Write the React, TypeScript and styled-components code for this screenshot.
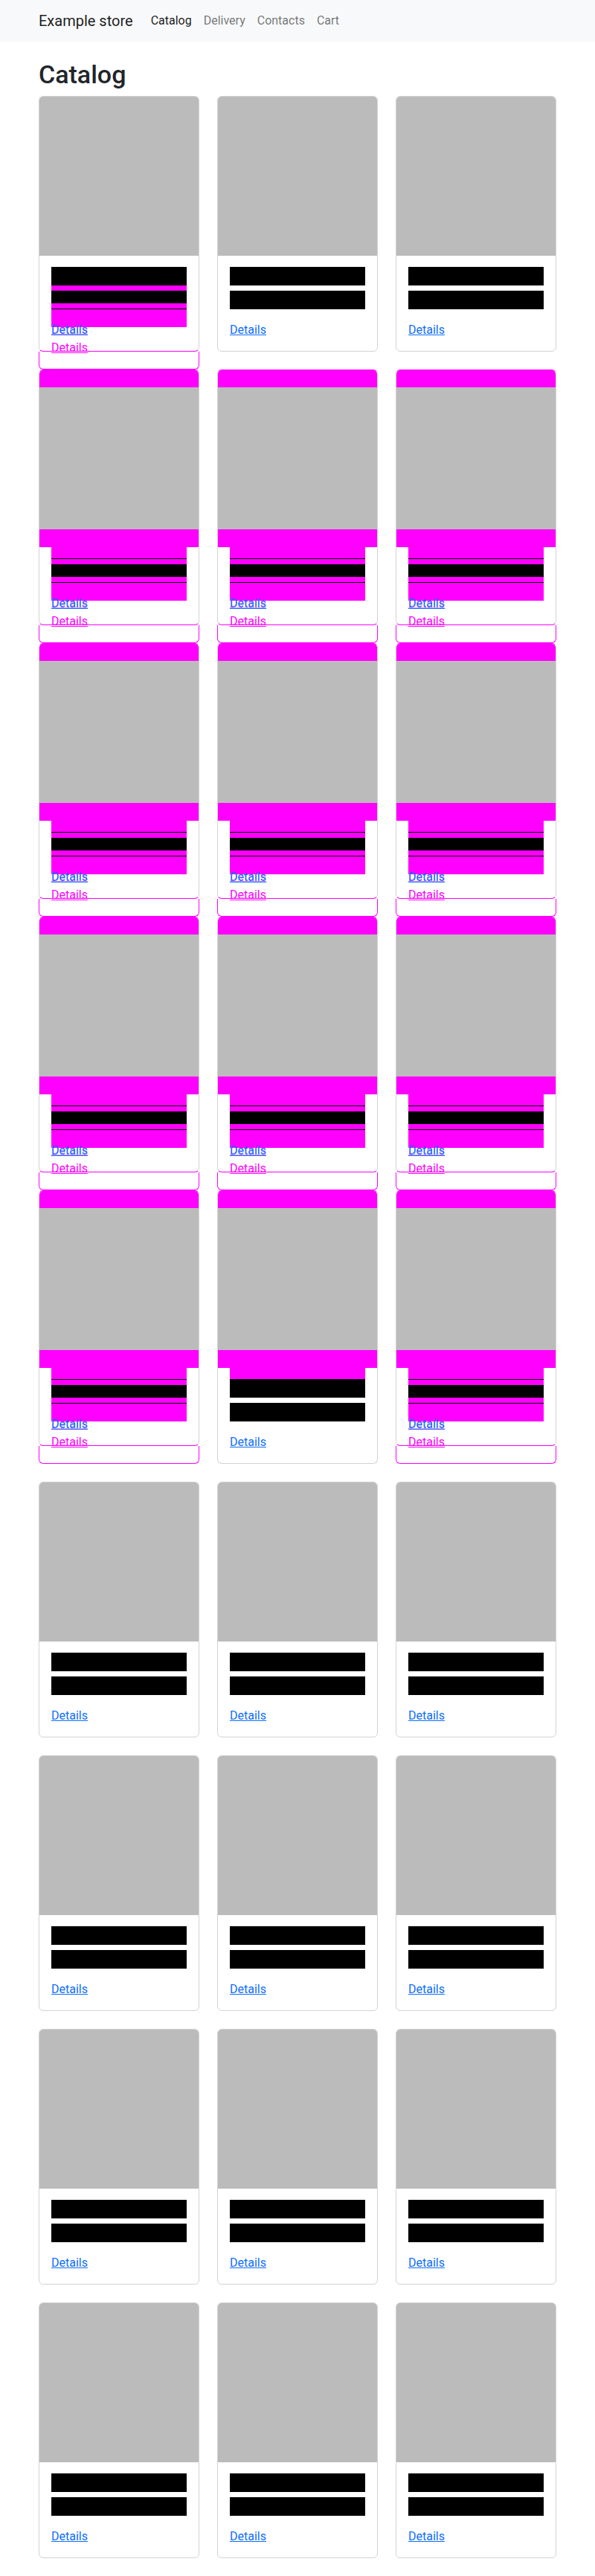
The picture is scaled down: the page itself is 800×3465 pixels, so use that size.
import styled, { createGlobalStyle } from "styled-components";

type Variant = "plain" | "grown" | "shifted" | "tall";
type Tone = "black" | "pink" | "white";

const PINK = "#ff00ff";
const EDGE = "#d3d3d3";

// stripe patterns drawn in the card body, in px from top to bottom
const stripes: Record<Variant, [Tone, number][]> = {
  plain: [
    ["black", 25],
    ["white", 7],
    ["black", 25],
  ],
  grown: [
    ["black", 25],
    ["pink", 7],
    ["black", 17],
    ["pink", 7],
    ["black", 1],
    ["pink", 24],
  ],
  shifted: [
    ["pink", 15],
    ["black", 1],
    ["pink", 7],
    ["black", 17],
    ["pink", 7],
    ["black", 1],
    ["pink", 24],
  ],
  tall: [
    ["pink", 15],
    ["black", 25],
    ["white", 7],
    ["black", 25],
  ],
};

const rows: { cards: Variant[]; gap: number }[] = [
  { cards: ["grown", "plain", "plain"], gap: 0 },
  { cards: ["shifted", "shifted", "shifted"], gap: 0 },
  { cards: ["shifted", "shifted", "shifted"], gap: 0 },
  { cards: ["shifted", "shifted", "shifted"], gap: 0 },
  { cards: ["shifted", "tall", "shifted"], gap: 24 },
  { cards: ["plain", "plain", "plain"], gap: 24 },
  { cards: ["plain", "plain", "plain"], gap: 24 },
  { cards: ["plain", "plain", "plain"], gap: 24 },
  { cards: ["plain", "plain", "plain"], gap: 24 },
];

const ProductCard = ({ variant }: { variant: Variant }) => {
  const ghost = variant === "grown" || variant === "shifted";
  const flashed = variant === "shifted" || variant === "tall";

  return (
    <div>
      <Shell $ghost={ghost} $flashTop={flashed}>
        {flashed && <TopFlash />}
        <Thumb $h={flashed ? 191 : 214} />
        {flashed && <Flash />}
        <Body $variant={variant}>
          {stripes[variant].map(([tone, h], i) => (
            <Stripe key={i} $tone={tone} $h={h} />
          ))}
          <DetailsLink href="#" $overlap={ghost}>
            Details
          </DetailsLink>
          {ghost && <GhostLink>Details</GhostLink>}
        </Body>
      </Shell>
      {ghost && <GhostFrame />}
    </div>
  );
};

const App = () => {
  return (
    <>
      <GlobalStyle />
      <NavBar>
        <NavInner>
          <Brand href="#">Example store</Brand>
          <NavLink href="#" $active>
            Catalog
          </NavLink>
          <NavLink href="#">Delivery</NavLink>
          <NavLink href="#">Contacts</NavLink>
          <NavLink href="#">Cart</NavLink>
        </NavInner>
      </NavBar>
      <Main>
        <Title>Catalog</Title>
        {rows.map((row, r) => (
          <CardRow key={r} $gap={row.gap}>
            {row.cards.map((v, c) => (
              <ProductCard key={c} variant={v} />
            ))}
          </CardRow>
        ))}
      </Main>
    </>
  );
};

const GlobalStyle = createGlobalStyle`
  * {
    box-sizing: border-box;
  }
  body {
    margin: 0;
    background: #fff;
    color: #212529;
    font-family: Roboto, "Liberation Sans", sans-serif;
  }
`;

const NavBar = styled.nav`
  background: #f8f9fa;
  padding: 8px 0;
`;
const NavInner = styled.div`
  width: 720px;
  margin: 0 auto;
  padding: 0 12px;
  display: flex;
  align-items: center;
`;
const Brand = styled.a`
  font-size: 20px;
  line-height: 30px;
  padding: 5px 0;
  margin-right: 16px;
  color: rgba(0, 0, 0, 0.9);
  text-decoration: none;
`;
const NavLink = styled.a<{ $active?: boolean }>`
  font-size: 16px;
  line-height: 24px;
  padding: 8px;
  color: ${(p) => (p.$active ? "rgba(0, 0, 0, 0.9)" : "rgba(0, 0, 0, 0.55)")};
  text-decoration: none;
`;

const Main = styled.main`
  width: 720px;
  margin: 0 auto;
  padding: 24px 12px 0;
`;
const Title = styled.h1`
  font-size: 34px;
  font-weight: 500;
  line-height: 41px;
  margin: 0 0 8px;
`;
const CardRow = styled.div<{ $gap: number }>`
  display: grid;
  grid-template-columns: repeat(3, 1fr);
  column-gap: 24px;
  align-items: start;
  margin-bottom: ${(p) => p.$gap}px;
`;

const Shell = styled.div<{ $ghost: boolean; $flashTop: boolean }>`
  border: 1px solid ${EDGE};
  border-top-color: ${(p) => (p.$flashTop ? PINK : EDGE)};
  border-bottom-color: ${(p) => (p.$ghost ? PINK : EDGE)};
  border-radius: 6px;
  background: #fff;
`;
const TopFlash = styled.div`
  height: 23px;
  background: ${PINK};
  border-radius: 5px 5px 0 0;
`;
const Thumb = styled.div<{ $h: number }>`
  height: ${(p) => p.$h}px;
  background: #bbbbbb;
  border-radius: ${(p) => (p.$h === 214 ? "5px 5px 0 0" : "0")};
`;
const Flash = styled.div`
  height: 24px;
  background: ${PINK};
`;
const Body = styled.div<{ $variant: Variant }>`
  padding: ${(p) =>
    p.$variant === "shifted" || p.$variant === "tall" ? "0 16px" : "15px 16px 0"};
  padding-bottom: ${(p) =>
    p.$variant === "plain" || p.$variant === "tall" ? "16px" : "0"};
  height: ${(p) =>
    p.$variant === "grown" ? "128px" : p.$variant === "shifted" ? "104px" : "auto"};
`;
const Stripe = styled.div<{ $tone: Tone; $h: number }>`
  height: ${(p) => p.$h}px;
  background: ${(p) =>
    p.$tone === "black" ? "#000" : p.$tone === "pink" ? PINK : "#fff"};
`;
const DetailsLink = styled.a<{ $overlap: boolean }>`
  display: block;
  width: max-content;
  margin-top: ${(p) => (p.$overlap ? "-8px" : "16px")};
  font-size: 16px;
  line-height: 24px;
  color: #0d6efd;
  text-decoration: underline;
  text-shadow: ${(p) => (p.$overlap ? "0 -1px 0 rgba(255, 0, 255, 0.45)" : "none")};
`;
const GhostLink = styled.span`
  display: block;
  width: max-content;
  font-size: 16px;
  line-height: 24px;
  color: ${PINK};
  text-decoration: underline;
`;
const GhostFrame = styled.div`
  height: 24px;
  border: 1px solid ${PINK};
  border-top: none;
  border-radius: 0 0 6px 6px;
`;

export default App;
